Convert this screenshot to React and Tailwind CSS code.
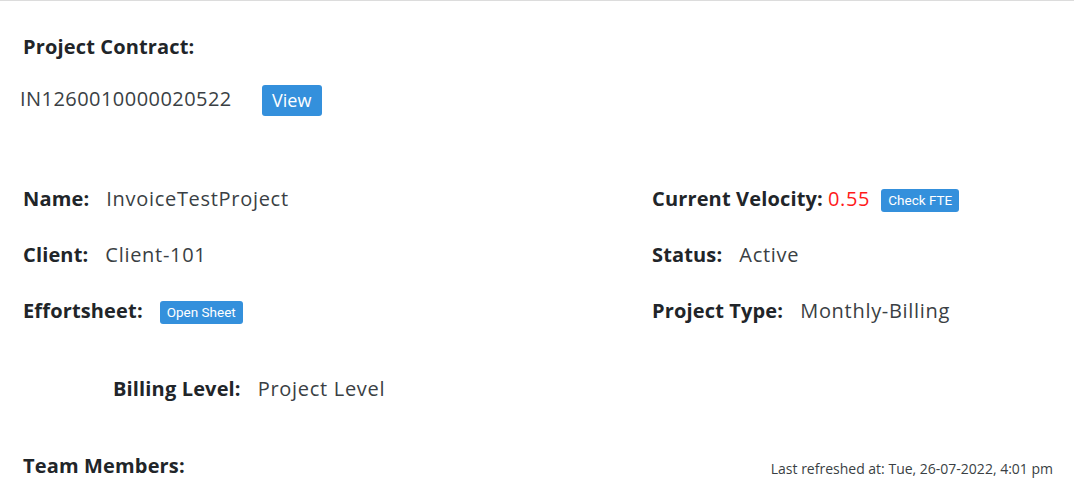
import React from 'react';

const font = { fontFamily: '"Open Sans", "Lato", sans-serif' };

const Field = ({ label, children, gap = 'ml-[17px]' }) => (
  <div className="h-[56px] flex items-center">
    <span className="font-bold text-[20px] tracking-[0.15px] text-[#212529]">{label}</span>
    <span className={`${gap} flex items-center text-[20px] tracking-[0.7px] text-[#3a3f44]`}>{children}</span>
  </div>
);

const SmallBtn = ({ children }) => (
  <button
    className="h-[23px] px-[7px] rounded-[3px] bg-[#3490dc] text-white text-[13.5px] tracking-normal leading-none"
    style={{ fontFamily: 'Roboto, sans-serif' }}
  >
    {children}
  </button>
);

export default function App() {
  return (
    <div className="w-[1074px] h-[490px] overflow-hidden bg-white border-t border-[#dcdcdc]" style={font}>
      <div className="pl-[23px] pr-[21px]">
        {/* Contrat */}
        <div className="mt-[32px] h-[28px] flex items-center font-bold text-[20px] tracking-[0.15px] text-[#212529]">
          Project Contract:
        </div>
        <div className="mt-[24px] h-[31px] flex items-center">
          <span className="-ml-[3px] text-[20px] tracking-[0.45px] text-[#3a3f44] -mt-[4px]">IN1260010000020522</span>
          <button className="ml-[30px] h-[31px] w-[60px] rounded-[3px] bg-[#3490dc] text-white text-[18px]">
            View
          </button>
        </div>

        {/* Infos projet */}
        <div className="mt-[55px] grid grid-cols-[629px_1fr]">
          <div>
            <Field label="Name:">InvoiceTestProject</Field>
            <Field label="Client:">Client-101</Field>
            <Field label="Effortsheet:">
              <span className="mt-[3px] flex"><SmallBtn>Open Sheet</SmallBtn></span>
            </Field>
          </div>
          <div>
            <Field label="Current Velocity:" gap="ml-[5px]">
              <span className="text-[#ff1a1a]">0.55</span>
              <span className="ml-[11px] mt-[3px] flex"><SmallBtn>Check FTE</SmallBtn></span>
            </Field>
            <Field label="Status:">Active</Field>
            <Field label="Project Type:">Monthly-Billing</Field>
          </div>
        </div>

        <div className="mt-[22px] pl-[90px]">
          <Field label="Billing Level:">Project Level</Field>
        </div>

        <div className="mt-[21px] h-[56px] flex items-center justify-between">
          <span className="font-bold text-[20px] tracking-[0.15px] text-[#212529]">Team Members:</span>
          <span className="text-[14px] text-[#3a3f44] mt-[4px]">Last refreshed at: Tue, 26-07-2022, 4:01 pm</span>
        </div>
      </div>
    </div>
  );
}
